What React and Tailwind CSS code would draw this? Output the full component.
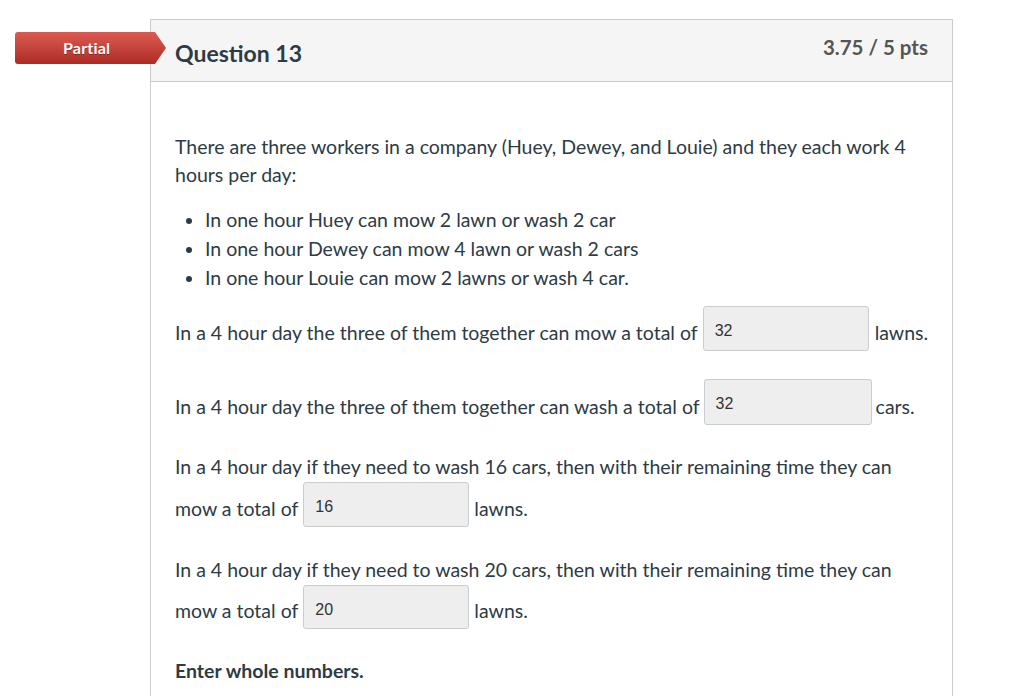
import React from "react";

function Box({ value, w = "w-[166px]", h = "h-[45px]" }) {
  return (
    <div
      className={`${w} ${h} shrink-0 rounded-[3px] border border-[#c7cdd1] bg-[#eeeeee] pl-[11px] pt-[14px] font-['Liberation_Sans',Arial,sans-serif] text-[16px] leading-[20px] text-[#333333]`}
    >
      {value}
    </div>
  );
}

export default function App() {
  return (
    <div className="relative min-h-[696px] w-[1024px] overflow-hidden bg-white font-['Lato',sans-serif] text-[#2d3b45]">
      {/* Partial badge */}
      <div className="absolute left-[15px] top-[32px] z-10 flex h-[32px] w-[151px] items-center rounded-l-[3px] bg-gradient-to-b from-[#dc5a52] to-[#ad2b25] pl-[48px] text-[16px] font-bold tracking-[0.2px] text-white [clip-path:polygon(0_0,140px_0,151px_50%,140px_100%,0_100%)] [text-shadow:0_1px_0_rgba(0,0,0,0.3)]">
        Partial
      </div>

      <div className="pl-[150px] pt-[19px]">
        <div className="w-[803px] border border-b-0 border-[#c7cdd1]">
          {/* Header */}
          <div className="flex h-[62px] items-start justify-between border-b border-[#c7cdd1] bg-[#f5f5f5] pl-[24px] pr-[24px]">
            <div className="mt-[18px] text-[23px] font-bold leading-[30px]">Question 13</div>
            <div className="mt-[14px] text-[20.5px] font-bold leading-[26px] text-[#555555]">3.75 / 5 pts</div>
          </div>

          {/* Body */}
          <div className="pl-[24px] pr-[24px] pt-[51px] pb-[20px] text-[19.5px]">
            <p className="leading-[28px]">
              There are three workers in a company (Huey, Dewey, and Louie) and they each work 4 hours per day:
            </p>
            <ul className="mt-[16px] list-disc pl-[30px] leading-[29px]">
              <li>In one hour Huey can mow 2 lawn or wash 2 car</li>
              <li>In one hour Dewey can mow 4 lawn or wash 2 cars</li>
              <li>In one hour Louie can mow 2 lawns or wash 4 car.</li>
            </ul>

            <div className="mt-[14px] flex items-start gap-[5px] whitespace-nowrap leading-[28px]">
              <span className="mt-[13px] shrink-0">In a 4 hour day the three of them together can mow a total of</span>
              <Box value="32" />
              <span className="mt-[13px] shrink-0 pl-[1px]">lawns.</span>
            </div>

            <div className="mt-[28px] flex items-start gap-[4px] whitespace-nowrap leading-[28px]">
              <span className="mt-[14px] shrink-0">In a 4 hour day the three of them together can wash a total of</span>
              <Box value="32" w="w-[168px]" h="h-[46px]" />
              <span className="mt-[14px] shrink-0">cars.</span>
            </div>

            <p className="mt-[28px] leading-[28px]">
              In a 4 hour day if they need to wash 16 cars, then with their remaining time they can
            </p>
            <div className="mt-[1px] flex items-start gap-[5px] whitespace-nowrap leading-[28px]">
              <span className="mt-[13px]">mow a total of</span>
              <Box value="16" />
              <span className="mt-[13px]">lawns.</span>
            </div>

            <p className="mt-[29px] leading-[28px]">
              In a 4 hour day if they need to wash 20 cars, then with their remaining time they can
            </p>
            <div className="mt-[1px] flex items-start gap-[5px] whitespace-nowrap leading-[28px]">
              <span className="mt-[12px]">mow a total of</span>
              <Box value="20" h="h-[44px]" />
              <span className="mt-[12px]">lawns.</span>
            </div>

            <p className="mt-[28px] font-bold leading-[28px]">Enter whole numbers.</p>
          </div>
        </div>
      </div>
    </div>
  );
}
